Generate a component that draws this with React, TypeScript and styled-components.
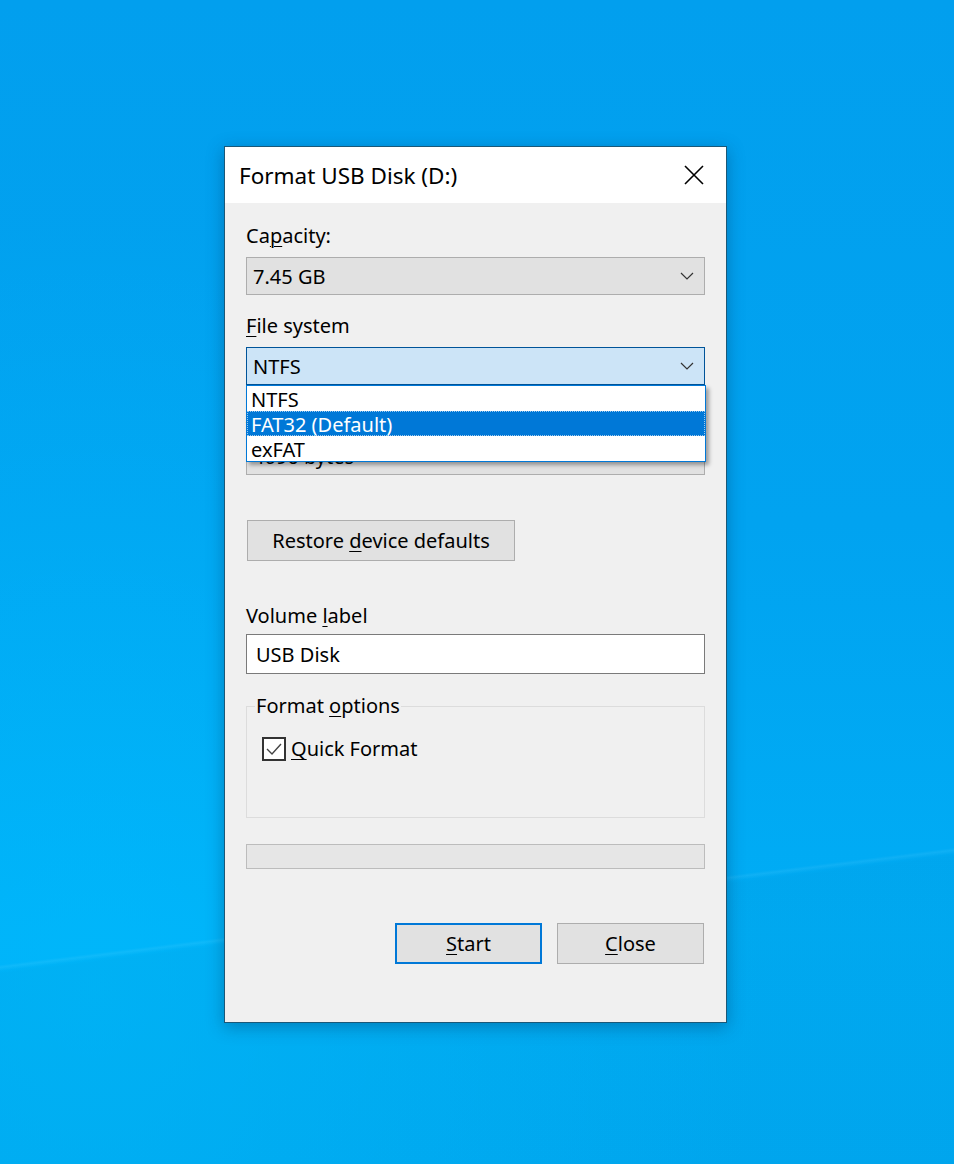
import React from "react";
import styled, { createGlobalStyle } from "styled-components";

// Global ------------------------------------------------------------------------

const GlobalStyle = createGlobalStyle`
  html, body {
    margin: 0;
    padding: 0;
  }
  body {
    font-family: "Noto Sans", "Open Sans", Arial, sans-serif;
    color: #000;
  }
`;

// Icons -------------------------------------------------------------------------

const Chevron = () => (
  <svg width="14" height="8" viewBox="0 0 14 8">
    <path d="M1 1 L7 7 L13 1" fill="none" stroke="#333" strokeWidth="1.2" />
  </svg>
);

const CloseIcon = () => (
  <svg width="20" height="20" viewBox="0 0 20 20">
    <path d="M1 1 L19 19 M19 1 L1 19" stroke="#000" strokeWidth="1.6" />
  </svg>
);

const Check = () => (
  <svg width="18" height="16" viewBox="0 0 18 16">
    <path d="M2 8 L7 13 L16 3" fill="none" stroke="#444" strokeWidth="1.4" />
  </svg>
);

// Data --------------------------------------------------------------------------

const fileSystems = [
  { name: "NTFS", selected: false },
  { name: "FAT32 (Default)", selected: true },
  { name: "exFAT", selected: false },
];

// Component ---------------------------------------------------------------------

const App: React.FC = () => {
  return (
    <Desktop>
      <GlobalStyle />
      <Window>
        <TitleBar>
          <Title>Format USB Disk (D:)</Title>
          <CloseButton>
            <CloseIcon />
          </CloseButton>
        </TitleBar>
        <Body>
          <Field>
            <Label>
              Ca<u>p</u>acity:
            </Label>
            <Combo>
              <span>7.45 GB</span>
              <Chevron />
            </Combo>
          </Field>

          <Field>
            <Label>
              <u>F</u>ile system
            </Label>
            <ComboWrap>
              <Combo focused>
                <span>NTFS</span>
                <Chevron />
              </Combo>
              <DropList>
                {fileSystems.map((fs) => (
                  <DropItem key={fs.name} selected={fs.selected}>
                    {fs.name}
                  </DropItem>
                ))}
              </DropList>
            </ComboWrap>
          </Field>

          <Field>
            <Label>
              <u>A</u>llocation unit size
            </Label>
            <Combo>
              <span>4096 bytes</span>
              <Chevron />
            </Combo>
          </Field>

          <RestoreRow>
            <Button>
              <span>
                Restore <u>d</u>evice defaults
              </span>
            </Button>
          </RestoreRow>

          <Field top={41} labelGap={4}>
            <Label>
              Volume <u>l</u>abel
            </Label>
            <TextInput>USB Disk</TextInput>
          </Field>

          <GroupBox>
            <Legend>
              Format <u>o</u>ptions
            </Legend>
            <CheckRow>
              <CheckBox>
                <Check />
              </CheckBox>
              <span>
                <u>Q</u>uick Format
              </span>
            </CheckRow>
          </GroupBox>

          <Progress />

          <Footer>
            <Button primary wide>
              <span>
                <u>S</u>tart
              </span>
            </Button>
            <Button wide>
              <span>
                <u>C</u>lose
              </span>
            </Button>
          </Footer>
        </Body>
      </Window>
    </Desktop>
  );
};

export default App;

// Styled ------------------------------------------------------------------------

const Desktop = styled.div`
  width: 954px;
  height: 1164px;
  display: flex;
  align-items: flex-start;
  justify-content: flex-start;
  box-sizing: border-box;
  padding: 146px 0 0 224px;
  overflow: hidden;
  background:
    linear-gradient(
      173deg,
      transparent 75.3%,
      rgba(255, 255, 255, 0.06) 75.5%,
      transparent 75.8%
    ),
    linear-gradient(173deg, rgba(0, 0, 0, 0) 75.5%, rgba(0, 20, 60, 0.03) 76%),
    radial-gradient(ellipse at 10% 85%, rgba(0, 190, 255, 0.55) 0%, rgba(0, 190, 255, 0) 55%),
    linear-gradient(180deg, #029fee 0%, #01a3f0 45%, #00adf5 80%, #00aaf3 100%);
`;

const Window = styled.div`
  width: 503px;
  height: 877px;
  box-sizing: border-box;
  border: 1px solid #1b5878;
  background: #f0f0f0;
  display: flex;
  flex-direction: column;
  box-shadow: 0 4px 16px rgba(0, 40, 80, 0.35);
`;

const TitleBar = styled.div`
  height: 56px;
  background: #fff;
  display: flex;
  align-items: center;
  justify-content: space-between;
  padding: 0 22px 0 14px;
  flex-shrink: 0;
`;

const Title = styled.div`
  font-size: 22.5px;
  padding-top: 1px;
`;

const CloseButton = styled.div`
  display: flex;
  align-items: center;
  justify-content: center;
  padding-bottom: 1px;
`;

const Body = styled.div`
  flex: 1;
  display: flex;
  flex-direction: column;
  padding: 19px 21px 0 21px;
  font-size: 20px;

  u {
    text-decoration-thickness: 1px;
    text-underline-offset: 3px;
  }
`;

const Field = styled.div<{ top?: number; labelGap?: number }>`
  display: flex;
  flex-direction: column;
  gap: ${({ labelGap }) => labelGap ?? 7}px;
  margin-top: ${({ top }) => top ?? 0}px;
  margin-bottom: 17px;
`;

const Label = styled.div`
  height: 28px;
  line-height: 28px;
`;

const Combo = styled.div<{ focused?: boolean }>`
  height: 38px;
  box-sizing: border-box;
  display: flex;
  align-items: center;
  justify-content: space-between;
  padding: 0 10px 0 6px;
  background: ${({ focused }) => (focused ? "#cce4f7" : "#e1e1e1")};
  border: 1px solid ${({ focused }) => (focused ? "#005499" : "#adadad")};
  font-size: 20px;
`;

const ComboWrap = styled.div`
  position: relative;
`;

const DropList = styled.div`
  position: absolute;
  top: 38px;
  left: 0;
  width: 460px;
  box-sizing: border-box;
  background: #fff;
  border: 1px solid #0078d7;
  z-index: 2;
  box-shadow: 3px 3px 4px rgba(0, 0, 0, 0.35);
`;

const DropItem = styled.div<{ selected?: boolean }>`
  height: 25px;
  line-height: 25px;
  box-sizing: border-box;
  padding-left: 3px;
  font-size: 20px;
  color: ${({ selected }) => (selected ? "#fff" : "#000")};
  background: ${({ selected }) => (selected ? "#0078d7" : "transparent")};
  border: 1px dotted ${({ selected }) => (selected ? "#9ec9ee" : "transparent")};
`;

const RestoreRow = styled.div`
  display: flex;
  margin-top: 28px;
  padding-left: 1px;
`;

const Button = styled.div<{ primary?: boolean; wide?: boolean }>`
  height: 41px;
  box-sizing: border-box;
  display: flex;
  align-items: center;
  justify-content: center;
  width: ${({ wide }) => (wide ? "147px" : "268px")};
  background: #e1e1e1;
  border: ${({ primary }) => (primary ? "2px solid #0078d7" : "1px solid #adadad")};
  font-size: 20px;
`;

const TextInput = styled.div`
  height: 40px;
  box-sizing: border-box;
  display: flex;
  align-items: center;
  padding-left: 9px;
  background: #fff;
  border: 1px solid #7a7a7a;
  font-size: 20px;
`;

const GroupBox = styled.fieldset`
  margin: 4px 0 0 0;
  height: 123px;
  box-sizing: border-box;
  border: 1px solid #dcdcdc;
  padding: 18px 14px 0 15px;
`;

const Legend = styled.legend`
  padding: 0 1px;
  margin-left: -7px;
  font-size: 20px;
  line-height: 22px;
`;

const CheckRow = styled.div`
  display: flex;
  align-items: center;
  gap: 5px;
  font-size: 20px;
  line-height: 27px;
`;

const CheckBox = styled.div`
  width: 24px;
  height: 24px;
  box-sizing: border-box;
  border: 2px solid #333;
  background: #fff;
  display: flex;
  align-items: center;
  justify-content: center;
`;

const Progress = styled.div`
  margin-top: 26px;
  height: 25px;
  box-sizing: border-box;
  background: #e6e6e6;
  border: 1px solid #bcbcbc;
`;

const Footer = styled.div`
  margin-top: 54px;
  display: flex;
  justify-content: flex-end;
  gap: 15px;
  padding-right: 1px;
`;
